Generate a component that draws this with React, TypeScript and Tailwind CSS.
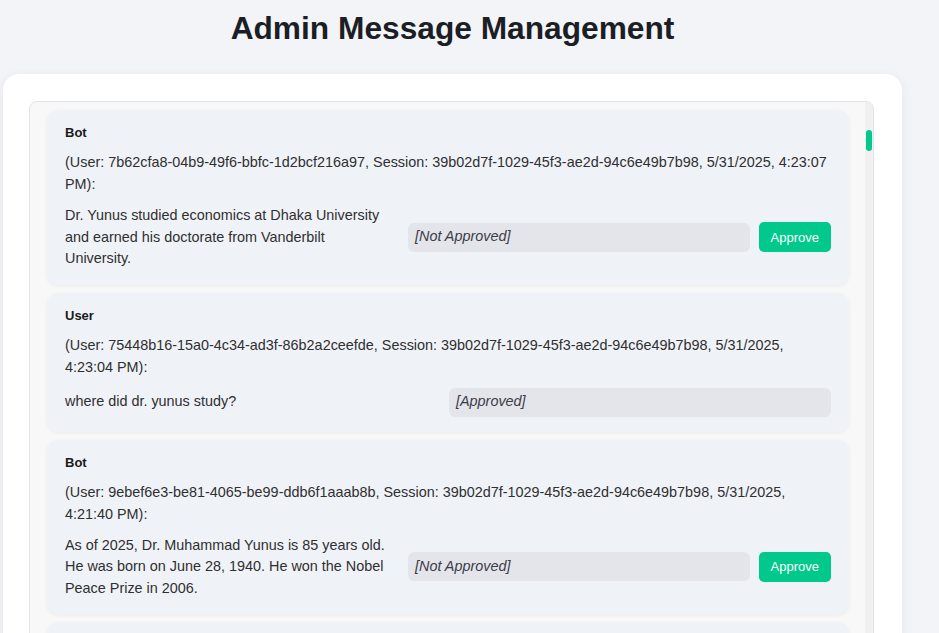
import React from 'react';

type Msg = {
  sender: 'Bot' | 'User';
  userId: string;
  time: string;
  text: string;
  approved: boolean;
};

const SESSION = '39b02d7f-1029-45f3-ae2d-94c6e49b7b98';

const messages: Msg[] = [
  {
    sender: 'Bot',
    userId: '7b62cfa8-04b9-49f6-bbfc-1d2bcf216a97',
    time: '5/31/2025, 4:23:07 PM',
    text: 'Dr. Yunus studied economics at Dhaka University and earned his doctorate from Vanderbilt University.',
    approved: false,
  },
  {
    sender: 'User',
    userId: '75448b16-15a0-4c34-ad3f-86b2a2ceefde',
    time: '5/31/2025, 4:23:04 PM',
    text: 'where did dr. yunus study?',
    approved: true,
  },
  {
    sender: 'Bot',
    userId: '9ebef6e3-be81-4065-be99-ddb6f1aaab8b',
    time: '5/31/2025, 4:21:40 PM',
    text: 'As of 2025, Dr. Muhammad Yunus is 85 years old. He was born on June 28, 1940. He won the Nobel Peace Prize in 2006.',
    approved: false,
  },
  {
    sender: 'User',
    userId: '75448b16-15a0-4c34-ad3f-86b2a2ceefde',
    time: '5/31/2025, 4:21:35 PM',
    text: 'how old is dr. yunus?',
    approved: true,
  },
];

const MessageCard = ({ msg }: { msg: Msg }) => (
  <div className="rounded-xl bg-[#eff3f8] px-[18px] pt-[14px] pb-[15px] shadow-[0_1px_4px_rgba(0,0,0,0.06)]">
    <div className="text-[13px] font-bold leading-[18px] text-[#1a1a1a]">{msg.sender}</div>
    <div className="mt-[9px] text-[14.4px] leading-[22px] text-[#2f2f2f]">
      (User: {msg.userId}, Session: {SESSION}, {msg.time}):
    </div>
    <div className="mt-[10px] flex items-center gap-4">
      <div
        className={
          msg.approved
            ? 'w-[368px] shrink-0 text-[14.4px] leading-[21.5px] text-[#2f2f2f]'
            : 'w-[327px] shrink-0 text-[14.4px] leading-[21.5px] text-[#2f2f2f]'
        }
      >
        {msg.text}
      </div>
      <div className="flex flex-1 items-center gap-[9px]">
        <div className="flex h-[29px] flex-1 items-center rounded-md bg-[#e4e5ea] px-[7px] text-[14.4px] italic text-[#3b3b48]">
          {msg.approved ? '[Approved]' : '[Not Approved]'}
        </div>
        {!msg.approved && (
          <button className="h-[30px] rounded-[5px] bg-[#00c98b] px-3 text-[13px] text-white">
            Approve
          </button>
        )}
      </div>
    </div>
  </div>
);

export default function App() {
  return (
    <div className="h-[633px] overflow-hidden bg-[#f3f4f8] font-['Liberation_Sans',Arial,sans-serif]">
      <h1 className="ml-[3px] w-[899px] pt-2 text-center text-[31.7px] font-bold leading-10 text-[#1c1e26]">
        Admin Message Management
      </h1>
      <div className="ml-[3px] mt-[26px] w-[899px] rounded-2xl bg-white pt-[27px] pl-[26px] pr-[28px] pb-6 shadow-[0_2px_12px_rgba(0,0,0,0.06)]">
        <div className="flex h-[620px] overflow-hidden rounded-lg border border-[#e2e4ec] bg-[#f8f8f8]">
          <div className="flex flex-1 flex-col gap-2 pl-[17px] pr-[16px] pt-2">
            {messages.map((m, i) => (
              <MessageCard key={i} msg={m} />
            ))}
          </div>
          <div className="w-[8px] bg-[#f0f0f0]">
            <div className="mt-[28px] ml-px h-[21px] w-[6px] rounded-[3px] bg-[#00c98b]" />
          </div>
        </div>
      </div>
    </div>
  );
}
